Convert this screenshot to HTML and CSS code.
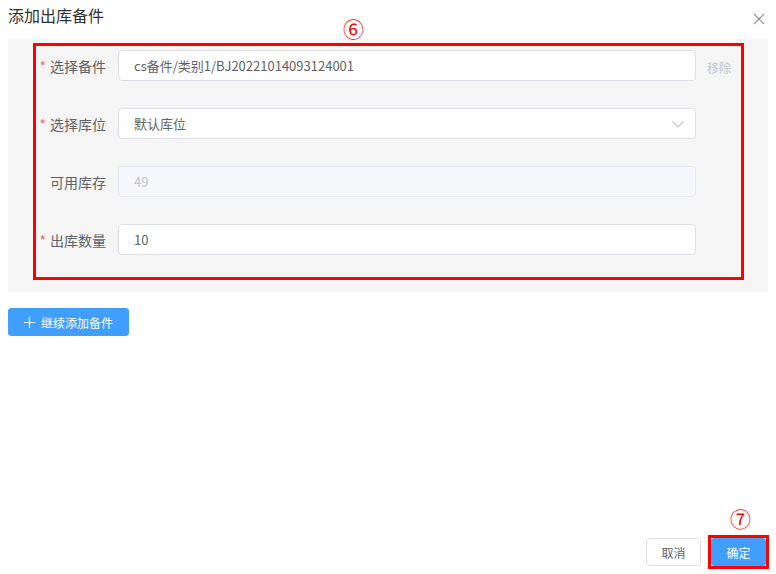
FILE: index.html
```html
<!DOCTYPE html>
<html lang="zh">
<head>
<meta charset="utf-8">
<link rel="stylesheet" href="styles.css">
</head>
<body>
<div class="dialog">
  <div class="header">
    <span class="title">添加出库备件</span>
    <svg class="close" width="12" height="12" viewBox="0 0 12 12"><path d="M1 1 L11 11 M11 1 L1 11" stroke="#909399" stroke-width="1.1" fill="none"/></svg>
    <span class="mark mark6">⑥</span>
  </div>
  <div class="panel">
    <div class="redbox">
      <div class="row">
        <label class="label req">选择备件</label>
        <div class="input">cs备件/类别1/BJ20221014093124001</div>
        <div class="side"><span class="remove">移除</span></div>
      </div>
      <div class="row">
        <label class="label req">选择库位</label>
        <div class="input select">默认库位
          <svg class="chev" width="12" height="7" viewBox="0 0 12 7"><path d="M0.5 0.5 L6 6 L11.5 0.5" stroke="#c0c4cc" stroke-width="1.2" fill="none"/></svg>
        </div>
        <div class="side"></div>
      </div>
      <div class="row">
        <label class="label">可用库存</label>
        <div class="input disabled">49</div>
        <div class="side"></div>
      </div>
      <div class="row">
        <label class="label req">出库数量</label>
        <div class="input">10</div>
        <div class="side"></div>
      </div>
    </div>
  </div>
  <div class="addrow">
    <button class="btn primary add"><svg width="11" height="11" viewBox="0 0 11 11"><path d="M5.5 0 V11 M0 5.5 H11" stroke="#fff" stroke-width="1.2" fill="none"/></svg>继续添加备件</button>
  </div>
  <div class="footer">
    <button class="btn">取消</button>
    <div class="okwrap">
      <span class="mark mark7">⑦</span>
      <button class="btn primary ok">确定</button>
    </div>
  </div>
</div>
</body>
</html>
```

FILE: styles.css
```css
* { box-sizing: border-box; }
html, body { margin: 0; padding: 0; background: #fff; }
body {
  font-family: "Noto Sans CJK SC", "Noto Sans", "Liberation Sans", sans-serif;
  color: #606266;
}
.dialog {
  width: 776px;
  height: 574px;
  padding: 0 8px 5px 8px;
  display: flex;
  flex-direction: column;
  position: relative;
}
.header {
  height: 39px;
  position: relative;
  display: flex;
  align-items: flex-start;
}
.title {
  font-size: 16px;
  line-height: 20px;
  margin-top: 5px;
  color: #303133;
}
.close {
  position: absolute;
  right: 3px;
  top: 13px;
}
.mark {
  position: absolute;
  color: #ff0000;
  font-size: 21px;
  line-height: 22px;
}
.mark6 { left: 335px; top: 17px; }
.panel {
  background: #f5f5f5;
  padding: 4px 24px 12px 25px;
}
.redbox {
  border: 3px solid #ff0000;
  padding: 4px 0 22px 2px;
  display: flex;
  flex-direction: column;
  gap: 27px;
}
.row {
  display: flex;
  align-items: center;
  height: 31px;
}
.label {
  width: 80px;
  padding-right: 12px;
  text-align: right;
  font-size: 14px;
  color: #606266;
  flex: none;
}
.label.req::before {
  content: "*";
  color: #f56c6c;
  margin-right: 4px;
}
.input {
  flex: 1;
  height: 31px;
  border: 1px solid #dcdfe6;
  border-radius: 4px;
  background: #fff;
  padding: 0 15px;
  font-size: 13px;
  line-height: 29px;
  color: #606266;
  position: relative;
}
.input.disabled {
  background: #f5f7fa;
  border-color: #e4e7ed;
  color: #c0c4cc;
}
.chev {
  position: absolute;
  right: 11px;
  top: 12px;
}
.side {
  width: 45px;
  flex: none;
  padding-left: 11px;
}
.remove {
  font-size: 12px;
  color: #c0c4cc;
}
.addrow {
  margin-top: 16px;
}
.btn {
  font-family: inherit;
  height: 28px;
  border: 1px solid #dcdfe6;
  border-radius: 3px;
  background: #fff;
  color: #606266;
  font-size: 12px;
  padding: 0 15px;
  cursor: pointer;
  display: inline-flex;
  align-items: center;
  justify-content: center;
  white-space: nowrap;
}
.btn.primary {
  background: #409eff;
  border-color: #409eff;
  color: #fff;
}
.add {
  width: 121px;
  gap: 6px;
  padding: 0;
}
.footer {
  margin-top: auto;
  display: flex;
  justify-content: flex-end;
  align-items: center;
  gap: 7px;
}
.footer .btn { width: 55px; padding: 0; }
.okwrap {
  position: relative;
  border: 3px solid #ff0000;
  display: flex;
  margin-right: -1px;
}
.mark7 { left: 19px; top: -31px; }
```
